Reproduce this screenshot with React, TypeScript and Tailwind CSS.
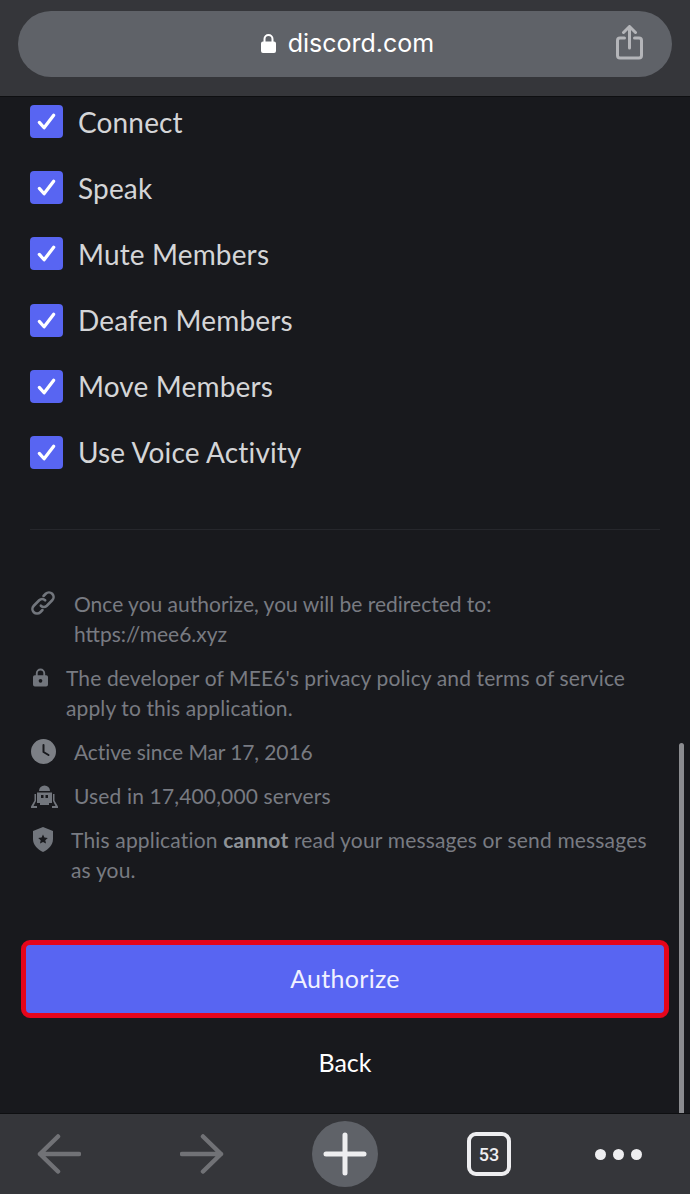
const scopes = ["Connect", "Speak", "Mute Members", "Deafen Members", "Move Members", "Use Voice Activity"];

function Check() {
  return (
    <div className="flex h-[33px] w-[33px] shrink-0 items-center justify-center rounded-[4px] bg-[#5865f2]">
      <svg width="23" height="23" viewBox="0 0 24 24" fill="none" stroke="#fff" strokeWidth="3.4" strokeLinecap="round" strokeLinejoin="round">
        <path d="M4.5 13l5 5.5L19.5 5.5" />
      </svg>
    </div>
  );
}

function LinkIcon() {
  return (
    <svg width="26" height="26" viewBox="0 0 24 24" fill="none" stroke="#72767d" strokeWidth="2.4" strokeLinecap="round" strokeLinejoin="round">
      <path d="M10 14.500a4 4 0 0 0 5.500 0l5-5a4.200 4.200 0 0 0-6-6L12.500 5.500" />
      <path d="M14 9.500a4 4 0 0 0-5.500 0l-5 5a4.200 4.200 0 0 0 6 6l2-2" />
    </svg>
  );
}

function LockIcon() {
  return (
    <svg width="16" height="19" viewBox="0 0 16 19" fill="#72767d">
      <path fillRule="evenodd" d="M8 0a5 5 0 0 1 5 5v2h1a2 2 0 0 1 2 2v8a2 2 0 0 1-2 2H2a2 2 0 0 1-2-2V9a2 2 0 0 1 2-2h1V5a5 5 0 0 1 5-5zm0 2a3 3 0 0 0-3 3v2h6V5a3 3 0 0 0-3-3zm0 9a2 2 0 1 0 0 4 2 2 0 0 0 0-4z" />
    </svg>
  );
}

function ClockIcon() {
  return (
    <svg width="25" height="25" viewBox="0 0 25 25">
      <circle cx="12.5" cy="12.5" r="12.5" fill="#7c7f85" />
      <path d="M12.5 6v7l5 3" fill="none" stroke="#18191d" strokeWidth="2" strokeLinecap="round" strokeLinejoin="round" />
    </svg>
  );
}

function RobotIcon() {
  return (
    <svg width="27" height="25" viewBox="0 0 27 25" fill="#72767d">
      <path d="M8 8a5.500 5.500 0 0 1 11 0z" />
      <path fillRule="evenodd" d="M6 9.500h15V20h-3v2H9v-2H6zM10 12v3h2.500v-3zm4.500 0v3H17v-3z" />
      <path d="M3.500 11h1.500v7l-2.500 5H6v2H0v-1.500l3.500-6zM22 11h1.500v6.500l3.500 6V25h-6v-2h3.500L22 18z" />
    </svg>
  );
}

function ShieldIcon() {
  return (
    <svg width="24" height="25" viewBox="0 0 24 25">
      <path d="M12 0l10 4v8c0 6-4.500 10.500-10 13C6.500 22.500 2 18 2 12V4z" fill="#72767d" />
      <path d="M12 7.500l1.400 3.100 3.400.4-2.500 2.300.7 3.300-3-1.700-3 1.700.7-3.300L7.200 11l3.400-.4z" fill="#18191d" />
    </svg>
  );
}

export default function App() {
  return (
    <div className="relative flex h-[1194px] w-[690px] flex-col overflow-hidden bg-[#18191d] font-['Lato',sans-serif]">
      <header className="flex h-[97px] shrink-0 border-b border-[#0e0f11] bg-[#35363a] px-[18px] pt-[11px]">
        <div className="relative flex h-[66px] w-full items-center justify-center rounded-[33px] bg-[#5f6268] pb-[2px] pl-[5px]">
          <svg className="mr-[12px]" width="15" height="19" viewBox="0 0 15 19" fill="#fff">
            <path fillRule="evenodd" d="M7.500 0A5 5 0 0 1 12.500 5v2.500H13a2 2 0 0 1 2 2V17a2 2 0 0 1-2 2H2a2 2 0 0 1-2-2V9.500a2 2 0 0 1 2-2h.5V5A5 5 0 0 1 7.500 0zm0 2A3 3 0 0 0 4.500 5v2.500h6V5a3 3 0 0 0-3-3z" />
          </svg>
          <span className="font-['Inter',sans-serif] text-[25px] leading-none text-white">discord.com</span>
          <svg className="absolute right-[29px] top-[14px]" width="27" height="35" viewBox="0 0 27 35" fill="none" stroke="#b4b5b9" strokeWidth="3" strokeLinecap="round" strokeLinejoin="round">
            <path d="M8.500 13H4a2.500 2.500 0 0 0-2.500 2.500v15A2.500 2.500 0 0 0 4 33h19a2.500 2.500 0 0 0 2.500-2.500v-15A2.500 2.500 0 0 0 23 13h-4.500" />
            <path d="M13.500 23V2M7.500 7.500l6-6 6 6" />
          </svg>
        </div>
      </header>

      <main className="flex flex-1 flex-col px-[30px] pt-[8px]">
        <div className="flex flex-col gap-[33.2px]">
          {scopes.map((s) => (
            <div key={s} className="flex h-[33px] items-center gap-[15px]">
              <Check />
              <span className="text-[28px] leading-none tracking-[0.15px] text-[#d4d5d7]">{s}</span>
            </div>
          ))}
        </div>

        <div className="mt-[60px] h-px w-[630px] bg-[#26272c]" />

        <div className="mt-[59px] flex flex-col text-[21px] leading-[30px] tracking-[0.12px] text-[#787b82]">
          <div className="flex items-start">
            <div className="mr-[18px] flex h-[30px] w-[26px] shrink-0 items-center justify-center pb-[2px]">
              <LinkIcon />
            </div>
            <span className="tracking-normal">
              Once you authorize, you will be redirected to:
              <br />
              https://mee6.xyz
            </span>
          </div>
          <div className="mt-[14px] flex items-start">
            <div className="mr-[18px] flex h-[30px] w-[18px] shrink-0 items-center justify-center pl-[3px]">
              <LockIcon />
            </div>
            <span>
              The developer of MEE6's privacy policy and terms of service
              <br />
              apply to this application.
            </span>
          </div>
          <div className="mt-[14px] flex items-center">
            <div className="mr-[17px] flex h-[30px] w-[27px] shrink-0 items-center justify-center">
              <ClockIcon />
            </div>
            <span className="tracking-[-0.1px]">Active since Mar 17, 2016</span>
          </div>
          <div className="mt-[14px] flex items-center">
            <div className="mr-[16px] flex h-[30px] w-[28px] shrink-0 items-center justify-center">
              <RobotIcon />
            </div>
            <span className="tracking-[0.15px]">Used in 17,400,000 servers</span>
          </div>
          <div className="mt-[14px] flex items-start">
            <div className="mr-[15px] flex h-[30px] w-[26px] shrink-0 items-center justify-center">
              <ShieldIcon />
            </div>
            <span className="whitespace-nowrap tracking-[0.17px]">
              This application <strong className="font-bold text-[#8e9297]">cannot</strong> read your messages or send messages
              <br />
              as you.
            </span>
          </div>
        </div>

        <button className="-mx-[9px] mt-[55px] flex h-[78px] w-[648px] shrink-0 items-center justify-center rounded-[9px] border-[5px] border-[#e5051b] bg-[#5865f2] text-[25px] tracking-[0.3px] text-[#f0f1ff]">
          Authorize
        </button>
        <div className="mt-[27px] text-center text-[25px] leading-[34px] text-white">Back</div>
      </main>

      <div className="absolute right-[6px] top-[743px] h-[370px] w-[5px] rounded-t-full bg-[#8b8c90]" />

      <footer className="relative flex h-[81px] shrink-0 items-center border-t border-[#0e0f11] bg-[#35363a]">
        <svg className="ml-[37px]" width="44" height="40" viewBox="0 0 44 40" fill="none" stroke="#717276" strokeWidth="4.500" strokeLinecap="round" strokeLinejoin="round">
          <path d="M42 20H3M21 2.500L3 20l18 17.500" />
        </svg>
        <svg className="ml-[99px]" width="44" height="40" viewBox="0 0 44 40" fill="none" stroke="#717276" strokeWidth="4.500" strokeLinecap="round" strokeLinejoin="round">
          <path d="M2 20h39M23 2.500L41 20 23 37.500" />
        </svg>
        <div className="ml-[88px] flex h-[66px] w-[66px] items-center justify-center rounded-full bg-[#5f6268]">
          <svg width="44" height="44" viewBox="0 0 44 44" stroke="#eeeef0" strokeWidth="5" strokeLinecap="round">
            <path d="M22 3v38M3 22h38" />
          </svg>
        </div>
        <div className="ml-[89px] flex h-[44px] w-[44px] items-center justify-center rounded-[9px] border-[4px] border-[#eeeef0] font-['Roboto',sans-serif] text-[18px] font-medium text-[#eeeef0]">
          53
        </div>
        <div className="ml-[84px] flex gap-[7px]">
          <div className="h-[11px] w-[11px] rounded-full bg-[#eeeef0]" />
          <div className="h-[11px] w-[11px] rounded-full bg-[#eeeef0]" />
          <div className="h-[11px] w-[11px] rounded-full bg-[#eeeef0]" />
        </div>
      </footer>
    </div>
  );
}
